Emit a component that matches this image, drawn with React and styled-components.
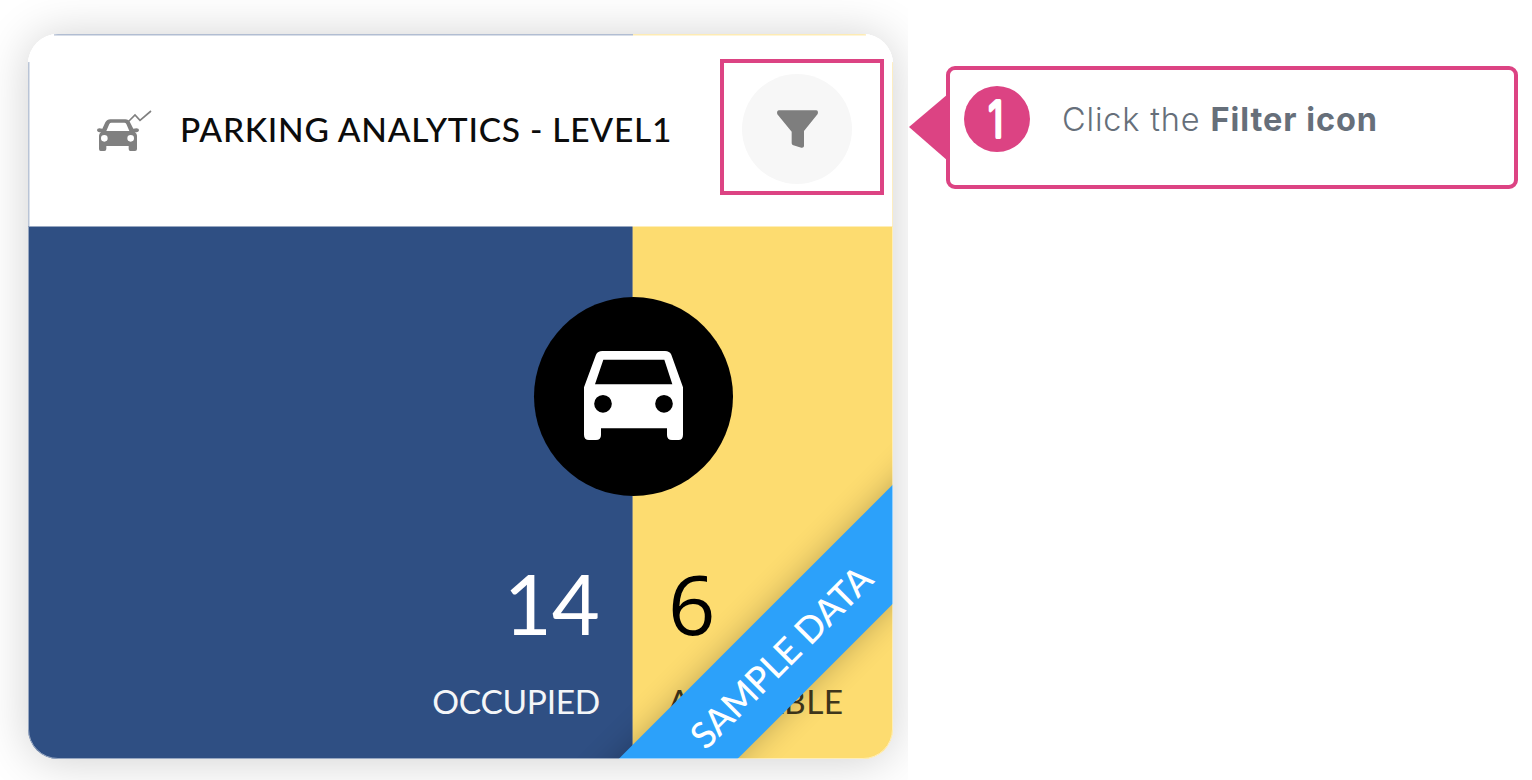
import React from "react";
import styled, { createGlobalStyle } from "styled-components";

const PINK = "#dc4383";
const BLUE = "#2f4f83";
const YELLOW = "#fddc70";

const GlobalStyle = createGlobalStyle`
  *, *::before, *::after { box-sizing: border-box; }
  body { margin: 0; background: #fff; font-family: Lato, "Liberation Sans", sans-serif; }
`;

const Page = styled.main`
  display: flex;
  width: 1532px;
  height: 780px;
  overflow: hidden;
`;

const Preview = styled.section`
  flex: none;
  width: 908px;
  height: 780px;
  padding: 34px 0 0 28px;
  overflow: hidden;
`;

const Card = styled.article`
  position: relative;
  display: flex;
  flex-direction: column;
  width: 865px;
  height: 725px;
  border-radius: 30px;
  overflow: hidden;
  background: #fff;
`;

const Shadow = styled.div`
  width: 865px;
  border-radius: 30px;
  box-shadow: 0 2px 48px rgba(0, 0, 0, 0.19);
`;

const Header = styled.header`
  flex: none;
  display: flex;
  align-items: center;
  height: 192px;
  padding: 0 9px 0 69px;
  background:
    linear-gradient(to right, transparent 26px, #b1bdd2 26px 605px, #fdebb4 605px 838px, transparent 838px) top / 100% 1.5px no-repeat,
    linear-gradient(to bottom, transparent 28px, #b9c4d6 28px) left / 1.5px 100% no-repeat,
    linear-gradient(to bottom, transparent 28px, #fdeec2 28px) right / 1.5px 100% no-repeat,
    #fff;
`;

const Title = styled.h1`
  flex: 1;
  margin: -2px 0 0 26px;
  font-size: 33.5px;
  font-weight: 500;
  line-height: 40px;
  letter-spacing: 0.73px;
  white-space: nowrap;
  color: #0c0c0c;
`;

const Highlight = styled.div`
  flex: none;
  display: flex;
  align-items: center;
  justify-content: center;
  width: 164px;
  height: 136px;
  margin-top: -6px;
  padding: 4px 10px 0 0;
  border: 4px solid ${PINK};
`;

const FilterButton = styled.button`
  display: flex;
  align-items: center;
  justify-content: center;
  flex: none;
  width: 110px;
  height: 110px;
  padding: 0;
  border: 0;
  border-radius: 50%;
  background: #f7f7f7;
`;

const Split = styled.div`
  position: relative;
  flex: 1;
  display: flex;
  &::before {
    content: "";
    position: absolute;
    left: 604px;
    top: 0;
    bottom: 0;
    width: 1px;
    background: #8a8e86;
  }
  &::after {
    content: "";
    position: absolute;
    inset: 0;
    border: 1.5px solid rgba(255, 255, 255, 0.5);
    border-radius: 0 0 30px 30px;
    z-index: 3;
  }
`;

const Share = styled.div`
  display: flex;
  flex-direction: column;
  justify-content: flex-end;
  align-items: ${(p) => (p.$end ? "flex-end" : "flex-start")};
  width: ${(p) => p.$width};
  padding: ${(p) => (p.$end ? "0 33px 38px 0" : "0 0 38px 35px")};
  background: ${(p) => p.$bg};
  color: ${(p) => p.$color};
`;

const Count = styled.div`
  font-family: ${(p) => p.$font || "inherit"};
  font-size: 83px;
  line-height: 100px;
  letter-spacing: ${(p) => p.$spacing || "0"};
`;

const Label = styled.div`
  margin-top: 28px;
  font-size: 33.5px;
  line-height: 40px;
  letter-spacing: ${(p) => p.$spacing};
  opacity: ${(p) => p.$opacity};
`;

const CarBadge = styled.div`
  position: absolute;
  z-index: 1;
  left: 506px;
  top: 70.5px;
  display: flex;
  align-items: center;
  justify-content: center;
  width: 199px;
  height: 199px;
  padding-bottom: 1px;
  border-radius: 50%;
  background: #000;
`;

const Ribbon = styled.div`
  position: absolute;
  z-index: 2;
  left: 504px;
  top: 579px;
  width: 500px;
  height: 84px;
  padding: 0 4px 1px 0;
  transform: rotate(-45deg);
  display: flex;
  align-items: center;
  justify-content: center;
  background: #2ca1fa;
  box-shadow: 0 0 30px rgba(0, 0, 0, 0.24);
  color: #fff;
  font-size: 36.5px;
  font-weight: 500;
  line-height: 44px;
  letter-spacing: -0.3px;
`;

const Callout = styled.aside`
  position: relative;
  flex: none;
  display: flex;
  align-items: flex-start;
  width: 572px;
  height: 123px;
  margin: 66px 0 0 38px;
  padding: 16px 14px;
  border: 4px solid ${PINK};
  border-radius: 9px;
`;

const Pointer = styled.svg`
  position: absolute;
  left: -41px;
  top: 24px;
`;

const StepNumber = styled.svg`
  flex: none;
  display: block;
`;

const Instruction = styled.p`
  margin: 14px 0 0 32px;
  font-family: Inter, "Liberation Sans", sans-serif;
  font-size: 32.5px;
  font-weight: 300;
  line-height: 40px;
  letter-spacing: 0.83px;
  white-space: nowrap;
  color: #666f7a;
  strong { font-weight: 700; letter-spacing: 0.95px; }
`;

const ParkingIcon = () => (
  <svg width="57" height="44" viewBox="51 54 171 132" fill="#808080">
    <path
      fillRule="evenodd"
      d="M67 116 76 97Q81 88 91 88H136Q146 88 150 97L160 116Q177 112 177 120Q177 127 165 127Q171 131 171 137V177Q171 183 165 183H151Q146 183 146 177V168H79V177Q79 183 73 183H62Q57 183 57 177V137Q57 131 63 127Q51 127 51 120Q51 112 67 116ZM79 123H148L139 102Q137 98 133 98H94Q90 98 88 102ZM73 135A10 10 0 1 0 73 155A10 10 0 1 0 73 135ZM152 135A10 10 0 1 0 152 155A10 10 0 1 0 152 135Z"
    />
    <path d="M144 96 165 75 180 91 213 63" fill="none" stroke="#808080" strokeWidth="5" />
  </svg>
);

const FilterIcon = () => (
  <svg width="41" height="38" viewBox="230 270 123 114" fill="#7e7e7e">
    <path d="M235 271H348Q355 272 352 282L311 333V379Q310 384 303 383L279 376Q274 375 274 370V335L231 283Q228 273 235 271Z" />
  </svg>
);

const CarIcon = () => (
  <svg width="99" height="89" viewBox="192 213 297 267" fill="#fff">
    <path
      fillRule="evenodd"
      d="M247 213H435Q449 213 454 224L489 322V464Q489 480 475 480H456Q441 480 441 465V445H243V465Q243 480 228 480H207Q192 480 192 464V322L228 224Q233 213 247 213ZM250 239 225 313H457L433 239ZM249 345A26 26 0 1 0 249 398A26 26 0 1 0 249 345ZM432 345A26 26 0 1 0 432 398A26 26 0 1 0 432 345Z"
    />
  </svg>
);

export default function App() {
  return (
    <Page>
      <GlobalStyle />
      <Preview>
        <Shadow>
          <Card>
            <Header>
              <ParkingIcon />
              <Title>PARKING ANALYTICS - LEVEL1</Title>
              <Highlight>
                <FilterButton aria-label="Filter">
                  <FilterIcon />
                </FilterButton>
              </Highlight>
            </Header>
            <Split>
              <Share $end $width="605px" $bg={BLUE} $color="#fff">
                <Count $spacing="0">14</Count>
                <Label $opacity={0.95} $spacing="-0.3px">OCCUPIED</Label>
              </Share>
              <Share $width="260px" $bg={YELLOW} $color="#000">
                <Count $font={'"Open Sans", sans-serif'}>6</Count>
                <Label $opacity={0.75} $spacing="0.4px">AVAILABLE</Label>
              </Share>
              <CarBadge>
                <CarIcon />
              </CarBadge>
            </Split>
            <Ribbon>SAMPLE DATA</Ribbon>
          </Card>
        </Shadow>
      </Preview>
      <Callout>
        <Pointer width="42" height="68" viewBox="0 0 42 68" fill={PINK}>
          <path d="M0 33 39 0V67Z" />
        </Pointer>
        <StepNumber width="66" height="66" viewBox="0 0 66 66">
          <circle cx="33" cy="33" r="33" fill={PINK} />
          <text
            transform="translate(31.8 51) scale(0.78 1)"
            textAnchor="middle"
            fontFamily="Inter, sans-serif"
            fontSize="49"
            fontWeight="300"
            fill="#fff"
            stroke="#fff"
            strokeWidth="4"
            strokeLinejoin="round"
          >
            1
          </text>
        </StepNumber>
        <Instruction>
          Click the <strong>Filter icon</strong>
        </Instruction>
      </Callout>
    </Page>
  );
}
